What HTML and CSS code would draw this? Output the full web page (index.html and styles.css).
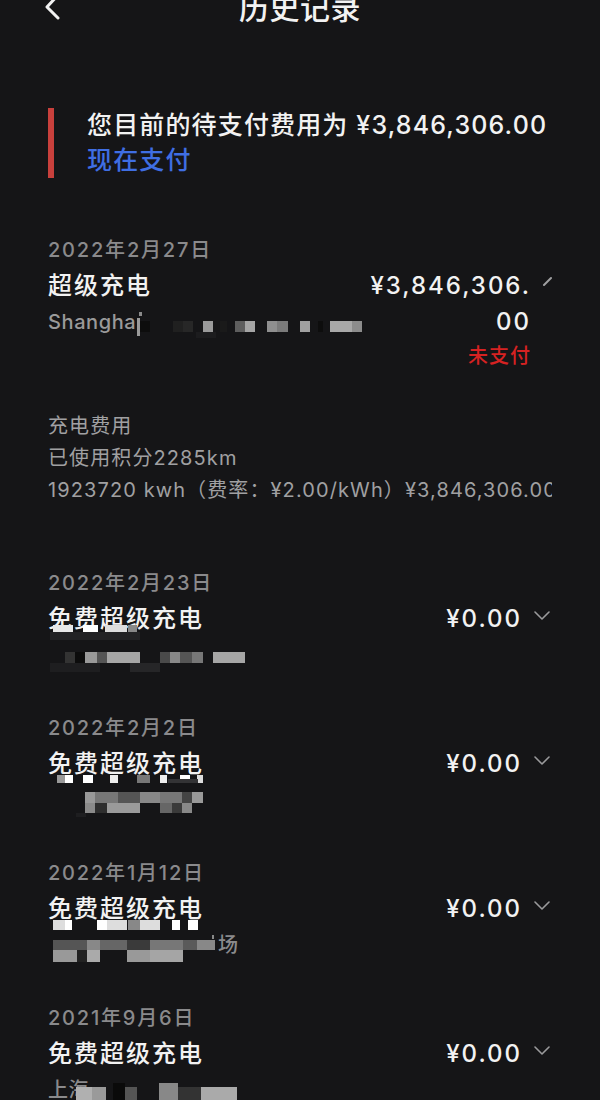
FILE: index.html
```html
<!DOCTYPE html>
<html lang="zh-CN">
<head>
<meta charset="utf-8">
<title>历史记录</title>
<link rel="stylesheet" href="styles.css">
</head>
<body>
<div class="screen">
  <header class="topbar">
    <svg class="back" width="18" height="24" viewBox="0 0 18 24">
      <polyline points="15,-6 3,7 14,18" />
    </svg>
    <h1 class="title">历史记录</h1>
    <span class="topbar-spacer"></span>
  </header>

  <section class="notice">
    <p class="notice-text">您目前的待支付费用为 ¥3,846,306.00</p>
    <a class="pay-link">现在支付</a>
  </section>

  <ul class="list">
    <li class="item item-first">
      <div class="date">2022年2月27日</div>
      <div class="row">
        <div class="main">
          <div class="name">超级充电</div>
          <div class="sub">
            <span class="sub-text">Shangha</span>
            <svg class="mosaic" width="240" height="34" viewBox="0 0 240 34">
              <rect x="1" y="13" width="3" height="18" fill="#9a9a9a"/>
              <rect x="3" y="7" width="3" height="4" fill="#8a8a8a"/>
              <rect x="4" y="16" width="10" height="11" fill="#0d0d0d"/>
              <rect x="37" y="16" width="10" height="11" fill="#202020"/>
              <rect x="47" y="16" width="10" height="11" fill="#272727"/>
              <rect x="67" y="16" width="10" height="11" fill="#9a9a9a"/>
              <rect x="84" y="16" width="7" height="11" fill="#1a1a1a"/>
              <rect x="99" y="16" width="10" height="11" fill="#5e5e5e"/>
              <rect x="109" y="16" width="10" height="11" fill="#a5a5a5"/>
              <rect x="131" y="16" width="10" height="11" fill="#8f8f8f"/>
              <rect x="141" y="16" width="11" height="11" fill="#7b7b7b"/>
              <rect x="164" y="16" width="10" height="11" fill="#a0a0a0"/>
              <rect x="182" y="16" width="5" height="11" fill="#0d0d0d"/>
              <rect x="194" y="16" width="22" height="11" fill="#a8a8a8"/>
              <rect x="216" y="16" width="10" height="11" fill="#8c8c8c"/>
              <rect x="60" y="27" width="20" height="6" fill="#1c1c1e"/>
            </svg>
          </div>
        </div>
        <div class="side side-first">
          <div class="amount">¥3,846,306.</div>
          <div class="amount amount-cont">00</div>
          <div class="status">未支付</div>
        </div>
        <svg class="chev-frag" width="21" height="38" viewBox="0 0 21 38">
          <line x1="13" y1="18" x2="20" y2="11" />
        </svg>
      </div>
      <div class="details">
        <p class="detail-line">充电费用</p>
        <p class="detail-line">已使用积分2285km</p>
        <p class="detail-line">1923720 kwh（费率：¥2.00/kWh）¥3,846,306.00</p>
      </div>
    </li>

    <li class="item">
      <div class="date">2022年2月23日</div>
      <div class="row">
        <div class="main">
          <div class="name">免费超级充电</div>
          <div class="sub">
            <svg class="mosaic" width="200" height="34" viewBox="0 0 200 34">
              <rect x="5" y="-13" width="20" height="7" fill="#e8e8e8"/>
              <rect x="35" y="-13" width="15" height="7" fill="#ffffff"/>
              <rect x="57" y="-13" width="22" height="7" fill="#dddddd"/>
              <rect x="80" y="-13" width="9" height="7" fill="#888888"/>
              <rect x="2" y="-6" width="90" height="8" fill="#222224"/>
              <rect x="17" y="14" width="10" height="11" fill="#333333"/>
              <rect x="27" y="14" width="10" height="11" fill="#0c0c0c"/>
              <rect x="37" y="14" width="12" height="11" fill="#999999"/>
              <rect x="49" y="14" width="10" height="11" fill="#555555"/>
              <rect x="59" y="14" width="33" height="11" fill="#a6a6a6"/>
              <rect x="112" y="14" width="10" height="11" fill="#4a4a4a"/>
              <rect x="122" y="14" width="10" height="11" fill="#888888"/>
              <rect x="132" y="14" width="12" height="11" fill="#555555"/>
              <rect x="144" y="14" width="11" height="11" fill="#777777"/>
              <rect x="165" y="14" width="32" height="11" fill="#a6a6a6"/>
              <rect x="2" y="25" width="50" height="9" fill="#1e1e20"/>
              <rect x="82" y="25" width="30" height="9" fill="#262628"/>
            </svg>
          </div>
        </div>
        <div class="side">
          <div class="amount">¥0.00</div>
        </div>
        <svg class="chev" width="16" height="10" viewBox="0 0 16 10">
          <polyline points="1,1 8,8 15,1" />
        </svg>
      </div>
    </li>

    <li class="item">
      <div class="date">2022年2月2日</div>
      <div class="row">
        <div class="main">
          <div class="name">免费超级充电</div>
          <div class="sub">
            <svg class="mosaic" width="200" height="34" viewBox="0 0 200 34">
              <rect x="9" y="-8" width="8" height="8" fill="#999999"/>
              <rect x="17" y="-8" width="8" height="8" fill="#ffffff"/>
              <rect x="35" y="-8" width="10" height="8" fill="#ffffff"/>
              <rect x="62" y="-8" width="8" height="8" fill="#eeeeee"/>
              <rect x="89" y="-8" width="13" height="8" fill="#777777"/>
              <rect x="112" y="-8" width="7" height="8" fill="#eeeeee"/>
              <rect x="132" y="-8" width="10" height="8" fill="#ffffff"/>
              <rect x="149" y="-8" width="6" height="8" fill="#dddddd"/>
              <rect x="120" y="-4" width="30" height="4" fill="#333335"/>
              <rect x="37" y="9" width="10" height="11" fill="#999999"/>
              <rect x="47" y="9" width="23" height="11" fill="#777777"/>
              <rect x="70" y="9" width="22" height="11" fill="#555555"/>
              <rect x="92" y="9" width="20" height="11" fill="#888888"/>
              <rect x="112" y="9" width="22" height="11" fill="#777777"/>
              <rect x="134" y="9" width="10" height="11" fill="#444444"/>
              <rect x="144" y="9" width="11" height="11" fill="#999999"/>
              <rect x="37" y="20" width="10" height="10" fill="#8a8a8a"/>
              <rect x="47" y="20" width="12" height="10" fill="#2e2e2e"/>
              <rect x="59" y="20" width="33" height="10" fill="#9a9a9a"/>
              <rect x="112" y="20" width="12" height="10" fill="#666666"/>
              <rect x="124" y="20" width="10" height="10" fill="#3a3a3a"/>
              <rect x="134" y="20" width="10" height="10" fill="#888888"/>
              <rect x="28" y="30" width="10" height="4" fill="#1e1e20"/>
            </svg>
          </div>
        </div>
        <div class="side">
          <div class="amount">¥0.00</div>
        </div>
        <svg class="chev" width="16" height="10" viewBox="0 0 16 10">
          <polyline points="1,1 8,8 15,1" />
        </svg>
      </div>
    </li>

    <li class="item">
      <div class="date">2022年1月12日</div>
      <div class="row">
        <div class="main">
          <div class="name">免费超级充电</div>
          <div class="sub">
            <svg class="mosaic" width="170" height="34" viewBox="0 0 170 34">
              <rect x="5" y="-8" width="12" height="10" fill="#dddddd"/>
              <rect x="17" y="-8" width="7" height="10" fill="#ffffff"/>
              <rect x="49" y="-8" width="10" height="10" fill="#ffffff"/>
              <rect x="59" y="-8" width="20" height="10" fill="#dddddd"/>
              <rect x="80" y="-8" width="12" height="10" fill="#888888"/>
              <rect x="92" y="-8" width="20" height="10" fill="#dddddd"/>
              <rect x="124" y="-8" width="8" height="10" fill="#ffffff"/>
              <rect x="140" y="-8" width="10" height="10" fill="#ffffff"/>
              <rect x="5" y="12" width="34" height="10" fill="#555555"/>
              <rect x="39" y="12" width="13" height="10" fill="#888888"/>
              <rect x="52" y="12" width="27" height="10" fill="#666666"/>
              <rect x="79" y="12" width="23" height="10" fill="#3a3a3a"/>
              <rect x="102" y="12" width="33" height="10" fill="#777777"/>
              <rect x="135" y="12" width="14" height="10" fill="#5a5a5a"/>
              <rect x="149" y="12" width="18" height="10" fill="#888888"/>
              <rect x="5" y="22" width="24" height="12" fill="#999999"/>
              <rect x="29" y="22" width="10" height="12" fill="#222222"/>
              <rect x="39" y="22" width="13" height="12" fill="#aaaaaa"/>
              <rect x="79" y="22" width="23" height="12" fill="#999999"/>
              <rect x="102" y="22" width="33" height="12" fill="#a5a5a5"/>
              <rect x="164" y="7" width="2" height="4" fill="#888888"/>
            </svg>
            <span class="sub-text sub-cjk">场</span>
          </div>
        </div>
        <div class="side">
          <div class="amount">¥0.00</div>
        </div>
        <svg class="chev" width="16" height="10" viewBox="0 0 16 10">
          <polyline points="1,1 8,8 15,1" />
        </svg>
      </div>
    </li>

    <li class="item">
      <div class="date">2021年9月6日</div>
      <div class="row">
        <div class="main">
          <div class="name">免费超级充电</div>
          <div class="sub">
            <span class="sub-text sub-cjk">上海</span>
            <svg class="mosaic mosaic-tail" width="170" height="34" viewBox="0 0 170 34">
              <rect x="-13" y="14" width="16" height="20" fill="#b0b0b0"/>
              <rect x="3" y="14" width="14" height="20" fill="#9a9a9a"/>
              <rect x="24" y="10" width="12" height="24" fill="#0a0a0a"/>
              <rect x="36" y="14" width="12" height="20" fill="#555555"/>
              <rect x="70" y="10" width="19" height="24" fill="#888888"/>
              <rect x="89" y="14" width="23" height="20" fill="#333333"/>
              <rect x="112" y="14" width="36" height="20" fill="#aaaaaa"/>
            </svg>
          </div>
        </div>
        <div class="side">
          <div class="amount">¥0.00</div>
        </div>
        <svg class="chev" width="16" height="10" viewBox="0 0 16 10">
          <polyline points="1,1 8,8 15,1" />
        </svg>
      </div>
    </li>
  </ul>
</div>
</body>
</html>
```

FILE: styles.css
```css
* {
  box-sizing: border-box;
  margin: 0;
  padding: 0;
}

html,
body {
  background: #151517;
}

body {
  width: 600px;
  height: 1100px;
  overflow: hidden;
  font-family: Inter, "Noto Sans CJK SC", sans-serif;
  color: #f2f2f2;
}

.screen {
  padding: 0 48px;
}

/* top bar */
.topbar {
  height: 30px;
  display: grid;
  grid-template-columns: 1fr auto 1fr;
  align-items: start;
}

.back {
  margin-left: -4px;
  overflow: visible;
}

.back polyline {
  fill: none;
  stroke: #f2f2f2;
  stroke-width: 3;
  stroke-linecap: round;
  stroke-linejoin: round;
}

.title {
  font-size: 30px;
  line-height: 30px;
  font-weight: 500;
  margin-top: -7px;
  letter-spacing: 0.5px;
}

/* notice */
.notice {
  margin-top: 78px;
  border-left: 6px solid #c8403c;
  padding-left: 33px;
  line-height: 35px;
  font-size: 25px;
  font-weight: 500;
  letter-spacing: 1.15px;
}

.notice-text {
  white-space: nowrap;
}

.pay-link {
  display: block;
  color: #3f6ee3;
}

/* list */
.list {
  list-style: none;
  margin-top: 55px;
}

.item {
  margin-bottom: 39px;
}

.date {
  font-size: 20px;
  line-height: 34px;
  color: #8a8a8c;
  font-weight: 500;
  letter-spacing: 1.8px;
}

.row {
  display: flex;
  align-items: flex-start;
}

.main {
  flex: 1;
  min-width: 0;
}

.name {
  font-size: 24px;
  line-height: 38px;
  font-weight: 500;
  letter-spacing: 2px;
}

.sub {
  height: 34px;
  display: flex;
  align-items: center;
  font-size: 20px;
  color: #9a9a9a;
}

.sub-text {
  font-weight: 500;
  line-height: 34px;
  letter-spacing: 0.6px;
}

.sub-cjk {
  color: #8a8a8c;
}

.mosaic {
  display: block;
  flex: none;
  overflow: visible;
}

.side {
  flex: none;
  text-align: right;
}

.amount {
  font-size: 24px;
  line-height: 38px;
  font-weight: 500;
  letter-spacing: 2px;
}

.amount-cont {
  line-height: 34px;
}

.status {
  font-size: 20px;
  line-height: 34px;
  color: #d62222;
  font-weight: 500;
  letter-spacing: 1px;
}

.chev {
  flex: none;
  margin: 11px 2px 0 12px;
}

.chev polyline {
  fill: none;
  stroke: #9a9a9c;
  stroke-width: 1.6;
  stroke-linecap: round;
  stroke-linejoin: round;
}

.chev-frag {
  flex: none;
}

.chev-frag line {
  stroke: #a0a0a2;
  stroke-width: 2;
  stroke-linecap: round;
}

.details {
  margin-top: 37px;
  padding-bottom: 21px;
  font-size: 20px;
  line-height: 32px;
  color: #a0a0a2;
  letter-spacing: 1.1px;
}

.detail-line {
  white-space: nowrap;
  overflow: hidden;
}
```
